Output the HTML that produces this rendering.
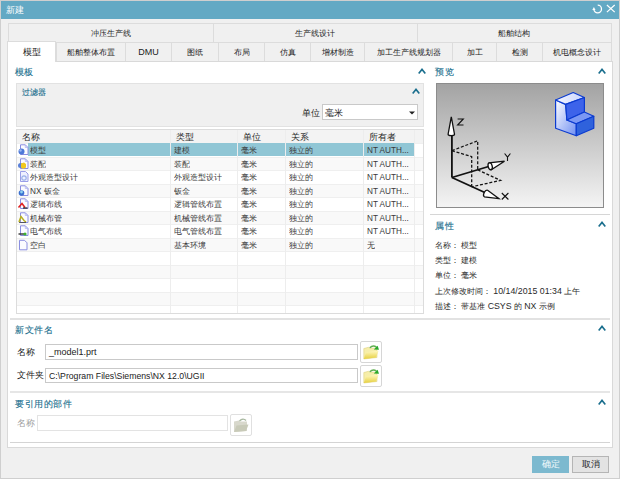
<!DOCTYPE html>
<html><head><meta charset="utf-8"><style>
*{box-sizing:border-box;margin:0;padding:0}
html,body{width:620px;height:479px;overflow:hidden;background:#f0f0f0;font-family:"Liberation Sans",sans-serif;font-size:9px;color:#222;font-weight:500}
.a{position:absolute}
.tab{position:absolute;height:20px;border:1px solid #dcdcdc;background:#f0f0f0;text-align:center;line-height:19.5px;color:#1c1c1c;white-space:nowrap;font-size:8px}
.teal{color:#1b6f8e;font-size:9.4px;letter-spacing:0.5px;-webkit-text-stroke:0.12px #1b6f8e}
.t{position:absolute;white-space:nowrap;line-height:10px}
.c{position:absolute;white-space:nowrap;line-height:10px;font-size:8.2px;color:#3a3a3a}
.p{position:absolute;white-space:nowrap;line-height:10px;font-size:8.3px;color:#2a2a2a}
.L{font-size:8.8px}
.inp{position:absolute;background:#fff;border:1px solid #c9c9c9}
.btnf{position:absolute;background:#fff;border:1px solid #d6d6d6;border-radius:2px}
</style></head><body>
<div class="a" style="left:0;top:0;width:620px;height:479px;border:1px solid #cfcfcf"></div>
<div class="a" style="left:1px;top:1px;width:618px;height:18px;background:#63a9c4"></div>
<span class="t" style="left:6px;top:4.5px;color:#fff;font-size:8.6px">新建</span>
<svg class="a" style="left:588px;top:0px" width="32" height="20" viewBox="0 0 32 20">
<path d="M9.7 5.2 A3.8 3.8 0 1 1 5.9 9" fill="none" stroke="#fff" stroke-width="1.3"/>
<path d="M4.3 10 L7.5 10 L5.9 6.9 Z" fill="#fff"/>
<path d="M18.9 5 L26.7 12.1 M26.7 5 L18.9 12.1" stroke="#fff" stroke-width="1.2"/></svg>
<div class="tab" style="left:8px;top:23px;width:205.5px;height:20px">冲压生产线</div>
<div class="tab" style="left:212.5px;top:23px;width:205.0px;height:20px">生产线设计</div>
<div class="tab" style="left:416.5px;top:23px;width:195.5px;height:20px">船舶结构</div>
<div class="tab" style="left:56px;top:42px;width:70px;height:20px">船舶整体布置</div>
<div class="tab" style="left:125px;top:42px;width:47px;height:20px"><span style="font-size:9px">DMU</span></div>
<div class="tab" style="left:171px;top:42px;width:48px;height:20px">图纸</div>
<div class="tab" style="left:218px;top:42px;width:47px;height:20px">布局</div>
<div class="tab" style="left:264px;top:42px;width:47px;height:20px">仿真</div>
<div class="tab" style="left:310px;top:42px;width:55px;height:20px">增材制造</div>
<div class="tab" style="left:364px;top:42px;width:89px;height:20px">加工生产线规划器</div>
<div class="tab" style="left:452px;top:42px;width:45px;height:20px">加工</div>
<div class="tab" style="left:496px;top:42px;width:47px;height:20px">检测</div>
<div class="tab" style="left:542px;top:42px;width:70px;height:20px">机电概念设计</div>
<div class="a" style="left:7px;top:61px;width:606px;height:387px;background:#fff;border:1px solid #d9d9d9"></div>
<div class="tab" style="left:7px;top:41px;width:49px;height:21px;background:#fff;border-bottom:none;line-height:20px;font-size:8.6px">模型</div>
<span class="t teal" style="left:15px;top:67px;letter-spacing:0">模板</span>
<svg class="a" style="left:418px;top:67.6px" width="8" height="7" viewBox="0 0 8 7"><path d="M0.7 5.6 L4 1.4 L7.3 5.6" fill="none" stroke="#1b6f8e" stroke-width="1.6"/></svg>
<div class="a" style="left:16px;top:83px;width:408px;height:44px;background:#f0f0f0;border:1px solid #e2e2e2"></div>
<span class="t teal" style="left:22px;top:87px;font-size:8.4px;letter-spacing:0.1px;-webkit-text-stroke:0.15px #1b6f8e">过滤器</span>
<svg class="a" style="left:412px;top:88.2px" width="8" height="7" viewBox="0 0 8 7"><path d="M0.7 5.6 L4 1.4 L7.3 5.6" fill="none" stroke="#1b6f8e" stroke-width="1.6"/></svg>
<span class="t" style="left:302px;top:108px">单位</span>
<div class="inp" style="left:322px;top:104px;width:96px;height:16px"></div>
<span class="t" style="left:325px;top:108px">毫米</span>
<svg class="a" style="left:409px;top:111px" width="6" height="4" viewBox="0 0 6 4"><path d="M0 0.5 L6 0.5 L3 3.5 Z" fill="#222"/></svg>
<div class="a" style="left:16px;top:129px;width:408px;height:185px;background:#fff;border:1px solid #dcdcdc"></div>
<div class="a" style="left:17px;top:130px;width:406px;height:13px;background:#f3f3f3"></div>
<div class="a" style="left:17px;top:143.0px;width:406px;height:13.5px;background:#ffffff;border-top:1px solid #efefef"></div>
<div class="a" style="left:17px;top:156.5px;width:406px;height:13.5px;background:#f9f9f9;border-top:1px solid #efefef"></div>
<div class="a" style="left:17px;top:170.0px;width:406px;height:13.5px;background:#ffffff;border-top:1px solid #efefef"></div>
<div class="a" style="left:17px;top:183.5px;width:406px;height:13.5px;background:#f9f9f9;border-top:1px solid #efefef"></div>
<div class="a" style="left:17px;top:197.0px;width:406px;height:13.5px;background:#ffffff;border-top:1px solid #efefef"></div>
<div class="a" style="left:17px;top:210.5px;width:406px;height:13.5px;background:#f9f9f9;border-top:1px solid #efefef"></div>
<div class="a" style="left:17px;top:224.0px;width:406px;height:13.5px;background:#ffffff;border-top:1px solid #efefef"></div>
<div class="a" style="left:17px;top:237.5px;width:406px;height:13.5px;background:#f9f9f9;border-top:1px solid #efefef"></div>
<div class="a" style="left:17px;top:251.0px;width:406px;height:13.5px;background:#ffffff;border-top:1px solid #efefef"></div>
<div class="a" style="left:17px;top:264.5px;width:406px;height:13.5px;background:#f9f9f9;border-top:1px solid #efefef"></div>
<div class="a" style="left:17px;top:278.0px;width:406px;height:13.5px;background:#ffffff;border-top:1px solid #efefef"></div>
<div class="a" style="left:17px;top:291.5px;width:406px;height:13.5px;background:#f9f9f9;border-top:1px solid #efefef"></div>
<div class="a" style="left:17px;top:305.0px;width:406px;height:8.0px;background:#ffffff;border-top:1px solid #efefef"></div>
<div class="a" style="left:28px;top:143px;width:386px;height:13px;background:#90c6d5"></div>
<div class="a" style="left:170px;top:130px;width:1px;height:183px;background:#ededed"></div>
<div class="a" style="left:237px;top:130px;width:1px;height:183px;background:#ededed"></div>
<div class="a" style="left:285px;top:130px;width:1px;height:183px;background:#ededed"></div>
<div class="a" style="left:363px;top:130px;width:1px;height:183px;background:#ededed"></div>
<div class="a" style="left:414px;top:130px;width:1px;height:183px;background:#ededed"></div>
<span class="c" style="left:22px;top:132.3px;color:#2a2a2a;font-size:8.5px;font-weight:400">名称</span>
<span class="c" style="left:176px;top:132.3px;color:#2a2a2a;font-size:8.5px;font-weight:400">类型</span>
<span class="c" style="left:243px;top:132.3px;color:#2a2a2a;font-size:8.5px;font-weight:400">单位</span>
<span class="c" style="left:291px;top:132.3px;color:#2a2a2a;font-size:8.5px;font-weight:400">关系</span>
<span class="c" style="left:369px;top:132.3px;color:#2a2a2a;font-size:8.5px;font-weight:400">所有者</span>
<span class="c" style="left:30px;top:146.2px;max-width:139px;overflow:hidden">模型</span>
<span class="c" style="left:174px;top:146.2px;max-width:62px;overflow:hidden">建模</span>
<span class="c" style="left:241px;top:146.2px;max-width:43px;overflow:hidden">毫米</span>
<span class="c" style="left:289px;top:146.2px;max-width:73px;overflow:hidden">独立的</span>
<span class="c" style="left:367px;top:146.2px;max-width:46px;overflow:hidden">NT AUTH...</span>
<svg class="a" style="left:17px;top:143.0px" width="13" height="13" viewBox="0 0 13 13"><path d="M3.5 1.8 H8.3 L11 4.5 V11.5 H3.5 Z" fill="#fbfbff" stroke="#8a8ee0" stroke-width="1"/><path d="M8.3 1.8 V4.5 H11" fill="none" stroke="#a8acee" stroke-width="0.7"/><circle cx="4.5" cy="8.5" r="3" fill="#4d78d8"/><circle cx="3.5" cy="7.5" r="1.2" fill="#9ab8f0"/></svg>
<span class="c" style="left:30px;top:159.7px;max-width:139px;overflow:hidden">装配</span>
<span class="c" style="left:174px;top:159.7px;max-width:62px;overflow:hidden">装配</span>
<span class="c" style="left:241px;top:159.7px;max-width:43px;overflow:hidden">毫米</span>
<span class="c" style="left:289px;top:159.7px;max-width:73px;overflow:hidden">独立的</span>
<span class="c" style="left:367px;top:159.7px;max-width:46px;overflow:hidden">NT AUTH...</span>
<svg class="a" style="left:17px;top:156.5px" width="13" height="13" viewBox="0 0 13 13"><path d="M3.5 1.8 H8.3 L11 4.5 V11.5 H3.5 Z" fill="#fbfbff" stroke="#8a8ee0" stroke-width="1"/><path d="M8.3 1.8 V4.5 H11" fill="none" stroke="#a8acee" stroke-width="0.7"/><circle cx="3.5" cy="8.5" r="2.5" fill="#5a80d8"/><path d="M4 6.5 L7 5.5 L9 7 V10.5 L6 12 L4 10.5 Z" fill="#f2c81c"/></svg>
<span class="c" style="left:30px;top:173.2px;max-width:139px;overflow:hidden">外观造型设计</span>
<span class="c" style="left:174px;top:173.2px;max-width:62px;overflow:hidden">外观造型设计</span>
<span class="c" style="left:241px;top:173.2px;max-width:43px;overflow:hidden">毫米</span>
<span class="c" style="left:289px;top:173.2px;max-width:73px;overflow:hidden">独立的</span>
<span class="c" style="left:367px;top:173.2px;max-width:46px;overflow:hidden">NT AUTH...</span>
<svg class="a" style="left:17px;top:170.0px" width="13" height="13" viewBox="0 0 13 13"><path d="M3.5 1.5 H8.5 L11 4 V11.5 H3.5 Z" fill="#eef0ff" stroke="#9a9ee8" stroke-width="1"/><circle cx="7" cy="8" r="2.2" fill="none" stroke="#9ab0e8" stroke-width="1.2"/></svg>
<span class="c" style="left:30px;top:186.7px;max-width:139px;overflow:hidden">NX 钣金</span>
<span class="c" style="left:174px;top:186.7px;max-width:62px;overflow:hidden">钣金</span>
<span class="c" style="left:241px;top:186.7px;max-width:43px;overflow:hidden">毫米</span>
<span class="c" style="left:289px;top:186.7px;max-width:73px;overflow:hidden">独立的</span>
<span class="c" style="left:367px;top:186.7px;max-width:46px;overflow:hidden">NT AUTH...</span>
<svg class="a" style="left:17px;top:183.5px" width="13" height="13" viewBox="0 0 13 13"><path d="M3.5 1.8 H8.3 L11 4.5 V11.5 H3.5 Z" fill="#fbfbff" stroke="#8a8ee0" stroke-width="1"/><path d="M8.3 1.8 V4.5 H11" fill="none" stroke="#a8acee" stroke-width="0.7"/><circle cx="4.5" cy="9" r="2.8" fill="#3a70d0"/><circle cx="4.5" cy="8" r="1.4" fill="#8fd0f0"/></svg>
<span class="c" style="left:30px;top:200.2px;max-width:139px;overflow:hidden">逻辑布线</span>
<span class="c" style="left:174px;top:200.2px;max-width:62px;overflow:hidden">逻辑管线布置</span>
<span class="c" style="left:241px;top:200.2px;max-width:43px;overflow:hidden">毫米</span>
<span class="c" style="left:289px;top:200.2px;max-width:73px;overflow:hidden">独立的</span>
<span class="c" style="left:367px;top:200.2px;max-width:46px;overflow:hidden">NT AUTH...</span>
<svg class="a" style="left:17px;top:197.0px" width="13" height="13" viewBox="0 0 13 13"><path d="M3.5 1.8 H8.3 L11 4.5 V11.5 H3.5 Z" fill="#fbfbff" stroke="#8a8ee0" stroke-width="1"/><path d="M8.3 1.8 V4.5 H11" fill="none" stroke="#a8acee" stroke-width="0.7"/><path d="M1.5 10.5 L5 6.5 L8 10.5" fill="none" stroke="#e02020" stroke-width="1.5"/><path d="M6 11 H10.5" stroke="#222" stroke-width="1.2"/></svg>
<span class="c" style="left:30px;top:213.7px;max-width:139px;overflow:hidden">机械布管</span>
<span class="c" style="left:174px;top:213.7px;max-width:62px;overflow:hidden">机械管线布置</span>
<span class="c" style="left:241px;top:213.7px;max-width:43px;overflow:hidden">毫米</span>
<span class="c" style="left:289px;top:213.7px;max-width:73px;overflow:hidden">独立的</span>
<span class="c" style="left:367px;top:213.7px;max-width:46px;overflow:hidden">NT AUTH...</span>
<svg class="a" style="left:17px;top:210.5px" width="13" height="13" viewBox="0 0 13 13"><path d="M3.5 1.8 H8.3 L11 4.5 V11.5 H3.5 Z" fill="#fbfbff" stroke="#8a8ee0" stroke-width="1"/><path d="M8.3 1.8 V4.5 H11" fill="none" stroke="#a8acee" stroke-width="0.7"/><path d="M2 11 L4 5.5 L7 9.5 L9 11" fill="none" stroke="#b8b020" stroke-width="1.5"/><path d="M2 11.5 H9" stroke="#444" stroke-width="0.8"/></svg>
<span class="c" style="left:30px;top:227.2px;max-width:139px;overflow:hidden">电气布线</span>
<span class="c" style="left:174px;top:227.2px;max-width:62px;overflow:hidden">电气管线布置</span>
<span class="c" style="left:241px;top:227.2px;max-width:43px;overflow:hidden">毫米</span>
<span class="c" style="left:289px;top:227.2px;max-width:73px;overflow:hidden">独立的</span>
<span class="c" style="left:367px;top:227.2px;max-width:46px;overflow:hidden">NT AUTH...</span>
<svg class="a" style="left:17px;top:224.0px" width="13" height="13" viewBox="0 0 13 13"><path d="M3.5 1.8 H8.3 L11 4.5 V11.5 H3.5 Z" fill="#fbfbff" stroke="#8a8ee0" stroke-width="1"/><path d="M8.3 1.8 V4.5 H11" fill="none" stroke="#a8acee" stroke-width="0.7"/><path d="M1.5 10 H9" stroke="#222" stroke-width="1.3"/><circle cx="8" cy="10" r="1.6" fill="#3cb030"/></svg>
<span class="c" style="left:30px;top:240.7px;max-width:139px;overflow:hidden">空白</span>
<span class="c" style="left:174px;top:240.7px;max-width:62px;overflow:hidden">基本环境</span>
<span class="c" style="left:241px;top:240.7px;max-width:43px;overflow:hidden">毫米</span>
<span class="c" style="left:289px;top:240.7px;max-width:73px;overflow:hidden">独立的</span>
<span class="c" style="left:367px;top:240.7px;max-width:46px;overflow:hidden">无</span>
<svg class="a" style="left:17px;top:237.5px" width="13" height="13" viewBox="0 0 13 13"><path d="M2.5 2.3 H7.5 L10 4.8 V11.8 H2.5 Z" fill="#fbfbff" stroke="#8a8ee0" stroke-width="1"/></svg>
<span class="t teal" style="left:435px;top:67px">预览</span>
<svg class="a" style="left:598px;top:67.6px" width="8" height="7" viewBox="0 0 8 7"><path d="M0.7 5.6 L4 1.4 L7.3 5.6" fill="none" stroke="#1b6f8e" stroke-width="1.6"/></svg>
<div class="a" style="left:436px;top:83px;width:168px;height:125px;border:1px solid #8c8c8c;background:linear-gradient(#a3a3a3,#f4f4f4)"></div>
<svg class="a" style="left:0;top:0" width="620" height="479" viewBox="0 0 620 479">
<g fill="none" stroke="#111" stroke-width="1.25" stroke-dasharray="3 1.8">
<path d="M451.9 150.7 L477.7 140.8 L477.7 169.8"/>
<path d="M451.9 150.7 L471.7 156.6 L471.7 186.8"/>
<path d="M477.7 169.8 L500.5 180.4 L471.7 186.8"/>
</g>
<g fill="none" stroke="#111" stroke-width="1.8">
<path d="M451.9 177.5 L451.9 134.5"/>
<path d="M451.9 177.5 L488.6 166.5"/>
<path d="M451.9 177.5 L487 193.5"/>
</g>
<g fill="#fff" stroke="#111" stroke-width="1.3">
<path d="M451.3 116.8 L448.1 134.2 A3.2 1.4 0 0 0 454.5 134.2 Z"/>
<path d="M504.5 161.2 L489.3 162.8 L491.3 169.8 Z"/>
<ellipse cx="490.2" cy="166.3" rx="2" ry="3.5" transform="rotate(-15 490.2 166.3)"/>
<path d="M498.8 198.6 L487.6 190.3 A2 3.6 25 0 0 484.4 196.8 Z"/>
</g>
<g fill="none" stroke="#111" stroke-width="1.1">
<path d="M457.6 119 H463.3 L457.6 125 H463.5"/>
<path d="M504.6 153.5 L507.5 157.2 L510.4 153.5 M507.5 157.2 V161"/>
<path d="M501.8 193 L508.4 199.5 M508.4 193 L501.8 199.5"/>
</g>
<defs>
<linearGradient id="lf" x1="0" y1="0" x2="1" y2="1"><stop offset="0" stop-color="#ffffff"/><stop offset="1" stop-color="#6f8ff2"/></linearGradient>
<linearGradient id="tf" x1="0" y1="0" x2="1" y2="0"><stop offset="0" stop-color="#f4f6ff"/><stop offset="1" stop-color="#c8d4ff"/></linearGradient>
</defs>
<g stroke="#0b3bd0" stroke-width="1.2" stroke-linejoin="round">
<path d="M555.6 100 L565.7 104.4 L566.9 120 L576.3 123.8 L576.3 135.7 L555.6 128.2 Z" fill="url(#lf)"/>
<path d="M555.6 100 L573.2 92.5 L584.4 97.5 L565.7 104.4 Z" fill="url(#tf)"/>
<path d="M565.7 104.4 L584.4 97.5 L584.4 112 L566.9 120 Z" fill="#3d63ea"/>
<path d="M566.9 120 L576.3 123.8 L593.8 116.3 L584.4 112 Z" fill="#7b98f4"/>
<path d="M576.3 123.8 L593.8 116.3 L593.8 128.2 L576.3 135.7 Z" fill="#2f62dc"/>
</g>
</svg>
<div class="a" style="left:430px;top:214px;width:180px;height:1px;background:#d6d6d6"></div>
<span class="t teal" style="left:435px;top:221px">属性</span>
<svg class="a" style="left:598px;top:220.6px" width="8" height="7" viewBox="0 0 8 7"><path d="M0.7 5.6 L4 1.4 L7.3 5.6" fill="none" stroke="#1b6f8e" stroke-width="1.6"/></svg>
<span class="p" style="left:435px;top:240.3px">名称： 模型</span>
<span class="p" style="left:435px;top:255px">类型： 建模</span>
<span class="p" style="left:435px;top:270px">单位： 毫米</span>
<span class="p" style="left:435px;top:285.5px">上次修改时间： <span class="L">10/14/2015 01:34</span> 上午</span>
<span class="p" style="left:435px;top:300.8px">描述： 带基准 <span class="L">CSYS</span> 的 <span class="L">NX</span> 示例</span>
<div class="a" style="left:10px;top:318px;width:600px;height:2px;background:#e2e2e2"></div>
<span class="t teal" style="left:15px;top:325px">新文件名</span>
<svg class="a" style="left:598px;top:325.4px" width="8" height="7" viewBox="0 0 8 7"><path d="M0.7 5.6 L4 1.4 L7.3 5.6" fill="none" stroke="#1b6f8e" stroke-width="1.6"/></svg>
<span class="t" style="left:17px;top:347px">名称</span>
<div class="inp" style="left:45px;top:344px;width:313px;height:16px"></div>
<span class="t" style="left:49px;top:347px">_model1.prt</span>
<div class="btnf" style="left:360px;top:341px;width:22px;height:22px"></div>
<svg class="a" style="left:360px;top:341px" width="22" height="22" viewBox="0 0 22 22"><defs><linearGradient id="fg341" x1="0" y1="0" x2="0" y2="1"><stop offset="0" stop-color="#fff8c0"/><stop offset="1" stop-color="#e6d040"/></linearGradient></defs><path d="M3.8 7.5 L8.5 6.3 L10 7.3 L17 7 V16.5 L3.8 18 Z" fill="#f6eeaa" stroke="#d8c870" stroke-width="0.5"/><path d="M3.8 18 L6 11.3 L18.5 9.8 L16 16.5 Z" fill="url(#fg341)"/><path d="M9.8 6.8 Q13 3.6 16.5 6.2" fill="none" stroke="#60b050" stroke-width="1.5"/><path d="M13.8 8.6 L19 8.8 L17.6 4.8 Z" fill="#2aa82a"/></svg>
<span class="t" style="left:17px;top:370px">文件夹</span>
<div class="inp" style="left:45px;top:368px;width:313px;height:15px"></div>
<span class="t" style="left:49px;top:371px;font-size:8.7px">C:\Program Files\Siemens\NX 12.0\UGII</span>
<div class="btnf" style="left:360px;top:365px;width:22px;height:22px"></div>
<svg class="a" style="left:360px;top:365px" width="22" height="22" viewBox="0 0 22 22"><defs><linearGradient id="fg365" x1="0" y1="0" x2="0" y2="1"><stop offset="0" stop-color="#fff8c0"/><stop offset="1" stop-color="#e6d040"/></linearGradient></defs><path d="M3.8 7.5 L8.5 6.3 L10 7.3 L17 7 V16.5 L3.8 18 Z" fill="#f6eeaa" stroke="#d8c870" stroke-width="0.5"/><path d="M3.8 18 L6 11.3 L18.5 9.8 L16 16.5 Z" fill="url(#fg365)"/><path d="M9.8 6.8 Q13 3.6 16.5 6.2" fill="none" stroke="#60b050" stroke-width="1.5"/><path d="M13.8 8.6 L19 8.8 L17.6 4.8 Z" fill="#2aa82a"/></svg>
<div class="a" style="left:10px;top:391px;width:600px;height:2px;background:#e6e6e6"></div>
<span class="t teal" style="left:15px;top:399px">要引用的部件</span>
<svg class="a" style="left:598px;top:398.9px" width="8" height="7" viewBox="0 0 8 7"><path d="M0.7 5.6 L4 1.4 L7.3 5.6" fill="none" stroke="#1b6f8e" stroke-width="1.6"/></svg>
<span class="t" style="left:17px;top:418px;color:#a0a0a0">名称</span>
<div class="inp" style="left:37px;top:415px;width:191px;height:16px;border-color:#e3e3e3"></div>
<div class="btnf" style="left:230px;top:414px;width:22px;height:22px;border-color:#e0e0e0"></div>
<svg class="a" style="left:230px;top:414px" width="22" height="22" viewBox="0 0 22 22"><path d="M4 7.5 L9 6.5 L10 7.5 L17 7.5 V17 L4 18 Z" fill="#d8d8cc"/><path d="M4 18 L6.5 11.5 L18.5 10.5 L16 17 Z" fill="#c8cab8"/><path d="M9.5 7 Q13 3.5 16 6.5" fill="none" stroke="#a8b8a0" stroke-width="1.4"/></svg>
<div class="a" style="left:10px;top:442px;width:600px;height:1px;background:#d4d4d4"></div>
<div class="a" style="left:532px;top:456px;width:37px;height:17px;background:#7cb9cf;color:#f4fafc;text-align:center;line-height:17px">确定</div>
<div class="a" style="left:572px;top:456px;width:37px;height:17px;background:#e3e3e3;border:1px solid #b5b5b5;text-align:center;line-height:15px;color:#222">取消</div>
</body></html>
